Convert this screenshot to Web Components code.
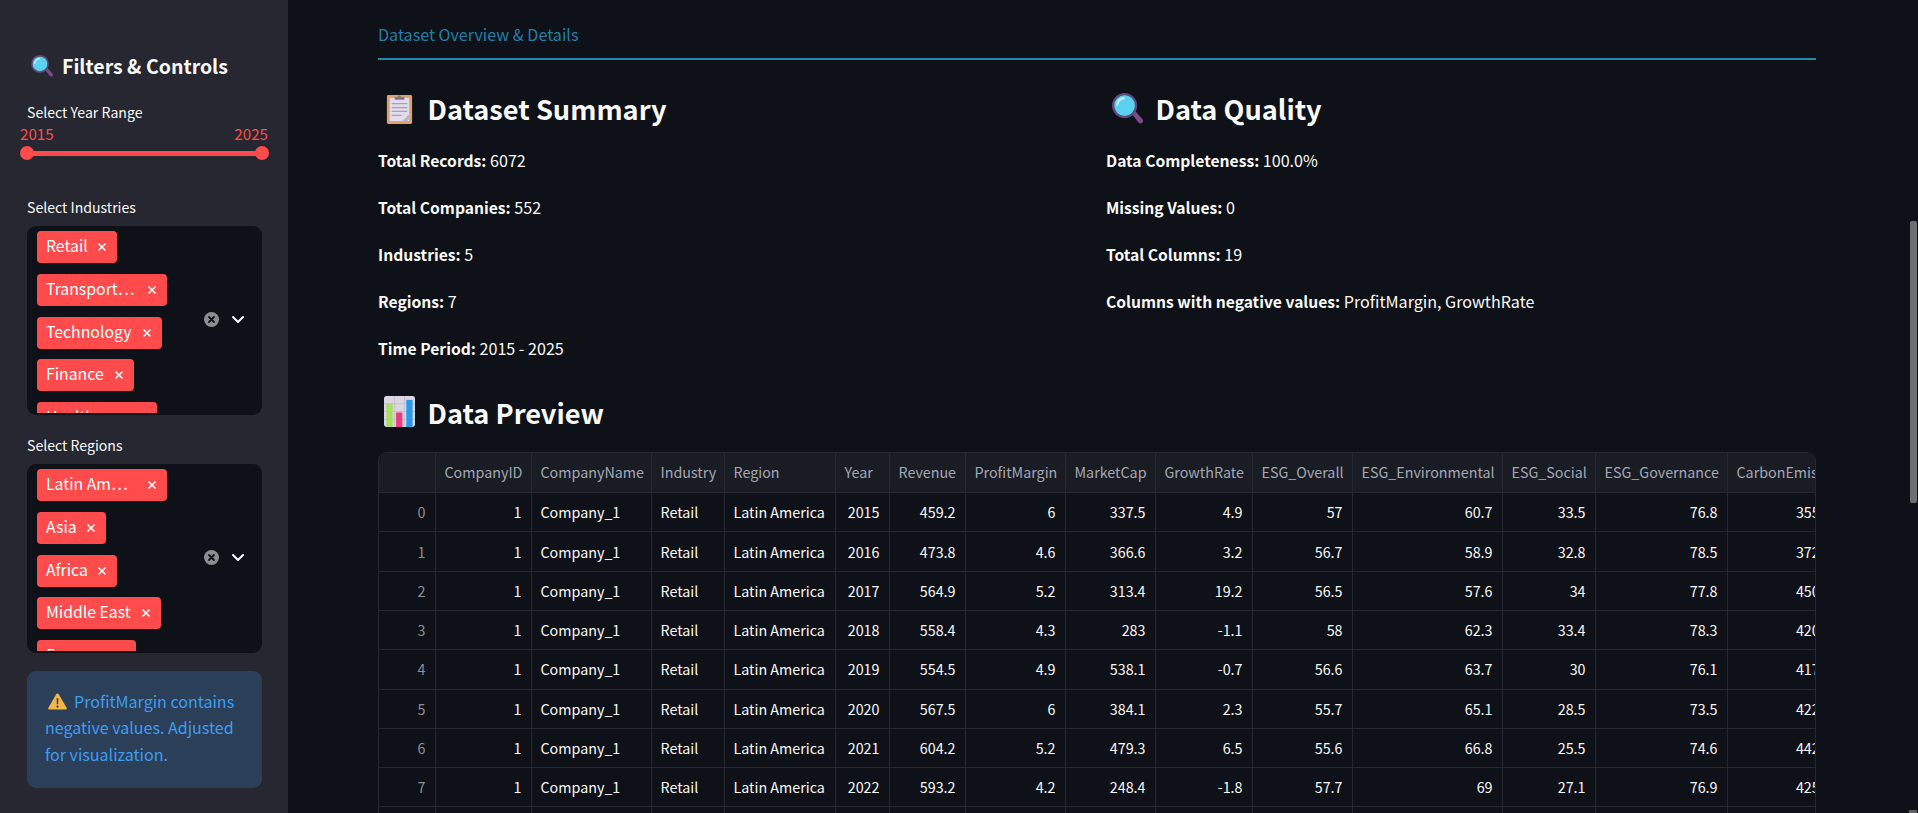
<!DOCTYPE html>
<html>
<head>
<meta charset="utf-8">
<title>Dataset Overview</title>
<style>
  html,body{margin:0;height:100%;overflow:hidden;background:#0e1117}
  body{font-family:"Noto Sans CJK SC","Source Sans Pro","Noto Sans",sans-serif;color:#fafafa}
</style>
</head>
<body>
<app-shell>
  <side-bar slot="side">
    <section-title size="side" icon="search">Filters &amp; Controls</section-title>
    <year-slider label="Select Year Range" from="2015" to="2025"></year-slider>
    <tag-select label="Select Industries" tags="Retail:80,Transport…:130,Technology:125,Finance:97,Healthcare:120"></tag-select>
    <tag-select label="Select Regions" tags="Latin Am…:130,Asia:69,Africa:80,Middle East:124,Europe:99"></tag-select>
    <info-note><emoji-icon name="warning" size="19"></emoji-icon>ProfitMargin contains negative values. Adjusted for visualization.</info-note>
  </side-bar>
  <tab-bar>Dataset Overview &amp; Details</tab-bar>
  <two-cols>
    <stat-block title="Dataset Summary" icon="clipboard">
      <stat-row name="Total Records:">6072</stat-row>
      <stat-row name="Total Companies:">552</stat-row>
      <stat-row name="Industries:">5</stat-row>
      <stat-row name="Regions:">7</stat-row>
      <stat-row name="Time Period:">2015 - 2025</stat-row>
    </stat-block>
    <stat-block title="Data Quality" icon="search">
      <stat-row name="Data Completeness:">100.0%</stat-row>
      <stat-row name="Missing Values:">0</stat-row>
      <stat-row name="Total Columns:">19</stat-row>
      <stat-row name="Columns with negative values:">ProfitMargin, GrowthRate</stat-row>
    </stat-block>
  </two-cols>
  <section-title icon="chart" style="margin-top:30px">Data Preview</section-title>
  <data-table></data-table>
</app-shell>

<script>
const ICONS = {
  search: `<svg viewBox="1 1 29.500 29.500"><path d="M19 20l3-3 8 9c1 1.500 .5 2.800-.5 3.500s-2.300 .6-3.300-.5z" fill="#7b4a8c"/><circle cx="13" cy="13" r="12" fill="#5e4a7d"/><circle cx="13" cy="13" r="9.800" fill="#5ad1ef"/><path d="M6 12c.5-3.500 3-5.500 6-6" stroke="#bdeefa" stroke-width="2.200" fill="none" stroke-linecap="round"/></svg>`,
  clipboard: `<svg viewBox="0 0 26 32"><rect x="0" y="2" width="26" height="30" rx="1.500" fill="#e0a06c"/><rect x="3" y="5" width="20" height="24" fill="#e4dcec"/><path d="M23 22v5l-2 2h-5z" fill="#bfb3c9"/><path d="M5 11h16M5 15h16M5 19h16M5 23h10" stroke="#a9a0b3" stroke-width="1.300"/><path d="M8 7V4h3.500c0-2 3-2 3 0H18v3z" fill="#7f7688"/></svg>`,
  chart: `<svg viewBox="0 0 32 32"><rect width="32" height="32" rx="2.500" fill="#dcd6e4"/><path d="M11 0v32M21 0v32M0 8h32M0 16h32M0 24h32" stroke="#c5bed0" stroke-width="1"/><rect x="2.500" y="8" width="6.500" height="24" fill="#a6e05e"/><rect x="12.500" y="17" width="6.500" height="15" fill="#ec3d80"/><rect x="23" y="4" width="6.500" height="28" fill="#2a9be8"/></svg>`,
  warning: `<svg viewBox="0 0 20 18"><path d="M10 .5c.6 0 1 .3 1.300 .8l8.300 14.400c.5 .9 0 1.800-1 1.800H1.400c-1 0-1.500-.9-1-1.800L8.700 1.300C9 .8 9.400 .5 10 .5z" fill="#f3b44b"/><path d="M9 5.500h2l-.3 6.500H9.300z" fill="#4a3a2c"/><circle cx="10" cy="14.300" r="1.200" fill="#4a3a2c"/></svg>`
};

class EmojiIcon extends HTMLElement {
  constructor(){
    super();
    const s = this.attachShadow({mode:'open'});
    const size = this.getAttribute('size')||'30';
    s.innerHTML = `<style>
      :host{display:inline-block;flex:none;width:${size}px;height:${size}px;line-height:0;vertical-align:-3px}
      svg{width:100%;height:100%;display:block}
    </style>${ICONS[this.getAttribute('name')]||''}`;
  }
}

class AppShell extends HTMLElement {
  constructor(){
    super();
    this.attachShadow({mode:'open'}).innerHTML = `<style>
      :host{display:flex;height:813px;width:1918px;overflow:hidden;background:#0e1117}
      .main{flex:1;min-width:0;padding:0 90px;overflow:hidden;height:813px;box-sizing:border-box}
      .bar{width:12px;height:813px;display:flex;flex-direction:column;align-items:flex-end}
      .thumb{width:7px;height:282px;margin:221px 1px 0 0;background:#6e6f73;border-radius:2px}
      .arrow{margin:auto 1px 0 0;width:8px;height:3px;background:#5f6064}
    </style>
    <slot name="side"></slot>
    <div class="main"><slot></slot></div>
    <div class="bar"><div class="thumb"></div><div class="arrow"></div></div>`;
  }
}

class SideBar extends HTMLElement {
  constructor(){
    super();
    this.attachShadow({mode:'open'}).innerHTML = `<style>
      :host{display:flex;flex-direction:column;flex:none;box-sizing:border-box;width:288px;height:813px;padding:50.500px 26px 0 27px;background:#262730;overflow:hidden}
    </style><slot></slot>`;
  }
}

class SectionTitle extends HTMLElement {
  constructor(){
    super();
    const side = this.getAttribute('size')==='side';
    const icon = this.getAttribute('icon');
    this.attachShadow({mode:'open'}).innerHTML = `<style>
      :host{display:flex;align-items:center;font-weight:600;color:#fafafa;
        ${side ? 'font-size:19.500px;line-height:30px;gap:9px;padding-left:4px' : 'font-size:27.200px;line-height:44px;gap:12.500px;padding-left:6px'}}
    </style><emoji-icon name="${icon}" size="${side?22:31}"></emoji-icon><span><slot></slot></span>`;
  }
}

class YearSlider extends HTMLElement {
  constructor(){
    super();
    this.attachShadow({mode:'open'}).innerHTML = `<style>
      :host{display:block;margin-top:19px;font-size:14.100px;height:95px}
      .label{line-height:24px;color:#fafafa}
      .vals{display:flex;justify-content:space-between;color:#ff4b4b;margin:-1px -6px 0 -7px;line-height:20px;font-size:15.200px}
      .track{height:5px;background:#ff4b4b;margin-top:8px;display:flex;justify-content:space-between;align-items:center;border-radius:3px}
      .h{width:14px;height:14px;border-radius:50%;background:#ff4b4b;margin:0 -1px 0 -7px}
      .h + .h{margin:0 -7px 0 0}
    </style>
    <div class="label">${this.getAttribute('label')}</div>
    <div class="vals"><span>${this.getAttribute('from')}</span><span>${this.getAttribute('to')}</span></div>
    <div class="track"><span class="h"></span><span class="h"></span></div>`;
  }
}

class TagSelect extends HTMLElement {
  constructor(){
    super();
    const tags = this.getAttribute('tags').split(',').map(t=>{
      const p = t.split(':');
      return `<span class="tag" style="width:${p[1]}px"><span class="t">${p[0]}</span><svg width="10" height="10" viewBox="0 0 10 10"><path d="M1.500 1.500l7 7M8.500 1.500l-7 7" stroke="#fff" stroke-width="1.600"/></svg></span>`;
    }).join('');
    this.attachShadow({mode:'open'}).innerHTML = `<style>
      :host{display:block;font-size:14.100px;height:238px}
      .label{line-height:24px;color:#fafafa;margin-bottom:7px}
      .box{height:189px;box-sizing:border-box;background:#0e1117;border-radius:9px;display:flex;overflow:hidden;padding:5.500px 0 1.500px 10px}
      .tags{flex:1;min-height:0;overflow:hidden;display:flex;flex-direction:column;align-items:flex-start;gap:10.800px;font-size:15.800px}
      .tag{flex:none;box-sizing:border-box;height:32px;background:#ff4b4b;color:#fff;border-radius:4px;display:flex;align-items:center;justify-content:space-between;padding:0 10px 0 9px;line-height:30px}
      .t{margin-bottom:2px}
      .ctl{display:flex;align-items:center;gap:12px;padding:0 17px 4.500px 0}
      .clr{width:15px;height:15px;border-radius:50%;background:#8c8d90;display:block}
      svg{display:block}
    </style>
    <div class="label">${this.getAttribute('label')}</div>
    <div class="box">
      <div class="tags">${tags}</div>
      <div class="ctl">
        <svg class="clr" viewBox="0 0 15 15"><path d="M5 5l5 5M10 5l-5 5" stroke="#0e1117" stroke-width="1.800" stroke-linecap="round"/></svg>
        <svg width="14" height="9" viewBox="0 0 14 9"><path d="M2 2l5 5 5-5" stroke="#fafafa" stroke-width="2" fill="none" stroke-linecap="round" stroke-linejoin="round"/></svg>
      </div>
    </div>`;
  }
}

class InfoNote extends HTMLElement {
  constructor(){
    super();
    this.attachShadow({mode:'open'}).innerHTML = `<style>
      :host{display:block;box-sizing:border-box;height:117px;margin-top:0;padding:17px 18px;background:#2b3f59;color:#3d9df3;border-radius:9px;font-size:16.050px;line-height:26.600px}
      ::slotted(emoji-icon){margin:0 7px 0 3px}
    </style><slot></slot>`;
  }
}

class TabBar extends HTMLElement {
  constructor(){
    super();
    this.attachShadow({mode:'open'}).innerHTML = `<style>
      :host{display:block;height:60px;box-sizing:border-box;border-bottom:2px solid #2487ad;color:#2280a8;font-size:16.100px;line-height:24px;padding-top:22px}
    </style><slot></slot>`;
  }
}

class TwoCols extends HTMLElement {
  constructor(){
    super();
    this.attachShadow({mode:'open'}).innerHTML = `<style>
      :host{display:grid;grid-template-columns:1fr 1fr;gap:18px;padding-top:26px}
    </style><slot></slot>`;
  }
}

class StatBlock extends HTMLElement {
  constructor(){
    super();
    this.attachShadow({mode:'open'}).innerHTML = `<style>
      :host{display:block}
      .rows{display:flex;flex-direction:column;gap:22.900px;margin-top:18px}
    </style>
    <section-title icon="${this.getAttribute('icon')}">${this.getAttribute('title')}</section-title>
    <div class="rows"><slot></slot></div>`;
  }
}

class StatRow extends HTMLElement {
  constructor(){
    super();
    this.attachShadow({mode:'open'}).innerHTML = `<style>
      :host{display:block;height:24px;font-size:16.100px;line-height:24px;color:#fafafa}
      b{font-weight:600;font-size:15.650px}
    </style><b>${this.getAttribute('name')}</b> <slot></slot>`;
  }
}

const COLS = [
  ['',56,'r'],['CompanyID',96,'r'],['CompanyName',120,'l'],['Industry',73,'l'],['Region',111,'l'],
  ['Year',54,'r'],['Revenue',76,'r'],['ProfitMargin',100,'r'],['MarketCap',90,'r'],['GrowthRate',97,'r'],
  ['ESG_Overall',100,'r'],['ESG_Environmental',150,'r'],['ESG_Social',93,'r'],['ESG_Governance',132,'r'],['CarbonEmissions',130,'r']
];
const ROWS = [
  [459.2,6,337.5,4.9,57,60.7,33.5,76.8,'3555.12'],
  [473.8,4.6,366.6,3.2,56.7,58.9,32.8,78.5,'3722.40'],
  [564.9,5.2,313.4,19.2,56.5,57.6,34,77.8,'4506.81'],
  [558.4,4.3,283,-1.1,58,62.3,33.4,78.3,'4206.37'],
  [554.5,4.9,538.1,-0.7,56.6,63.7,30,76.1,'4177.25'],
  [567.5,6,384.1,2.3,55.7,65.1,28.5,73.5,'4223.64'],
  [604.2,5.2,479.3,6.5,55.6,66.8,25.5,74.6,'4425.09'],
  [593.2,4.2,248.4,-1.8,57.7,69,27.1,76.9,'4258.73'],
  [617.4,4.8,301.2,4.1,57.1,70.2,26.4,77.2,'4391.52']
];

class DataTable extends HTMLElement {
  constructor(){
    super();
    const head = COLS.map(c=>`<th>${c[0]}</th>`).join('');
    const body = ROWS.map((r,i)=>{
      const cells = [i,1,'Company_1','Retail','Latin America',2015+i].concat(r);
      return `<tr>`+cells.map((v,j)=>`<td class="${COLS[j][2]}${j===0?' idx':''}">${v}</td>`).join('')+`</tr>`;
    }).join('');
    this.attachShadow({mode:'open'}).innerHTML = `<style>
      :host{display:block;margin-top:18px;height:400px;overflow:hidden;border-radius:9px 9px 0 0;border:1px solid #262730;border-bottom:0;box-sizing:border-box;font-size:14.300px}
      table{border-collapse:collapse;table-layout:fixed;width:${COLS.reduce((a,c)=>a+c[1],0)}px}
      th,td{height:39.300px;padding:0 9px;box-sizing:border-box;border:1px solid #262730;white-space:nowrap;overflow:hidden;font-weight:400;line-height:20px}
      tr>:first-child{border-left:0}
      tr:first-child th{border-top:0}
      th{background:#1a1c24;color:#a3a8b4;text-align:left;height:40px}
      td{color:#fafafa}
      .r{text-align:right}
      td.idx{color:#8a8f9a}
    </style>
    <table><colgroup>${COLS.map(c=>`<col style="width:${c[1]}px">`).join('')}</colgroup><thead><tr>${head}</tr></thead><tbody>${body}</tbody></table>`;
  }
}

customElements.define('emoji-icon', EmojiIcon);
customElements.define('app-shell', AppShell);
customElements.define('side-bar', SideBar);
customElements.define('section-title', SectionTitle);
customElements.define('year-slider', YearSlider);
customElements.define('tag-select', TagSelect);
customElements.define('info-note', InfoNote);
customElements.define('tab-bar', TabBar);
customElements.define('two-cols', TwoCols);
customElements.define('stat-block', StatBlock);
customElements.define('stat-row', StatRow);
customElements.define('data-table', DataTable);
</script>
</body>
</html>
